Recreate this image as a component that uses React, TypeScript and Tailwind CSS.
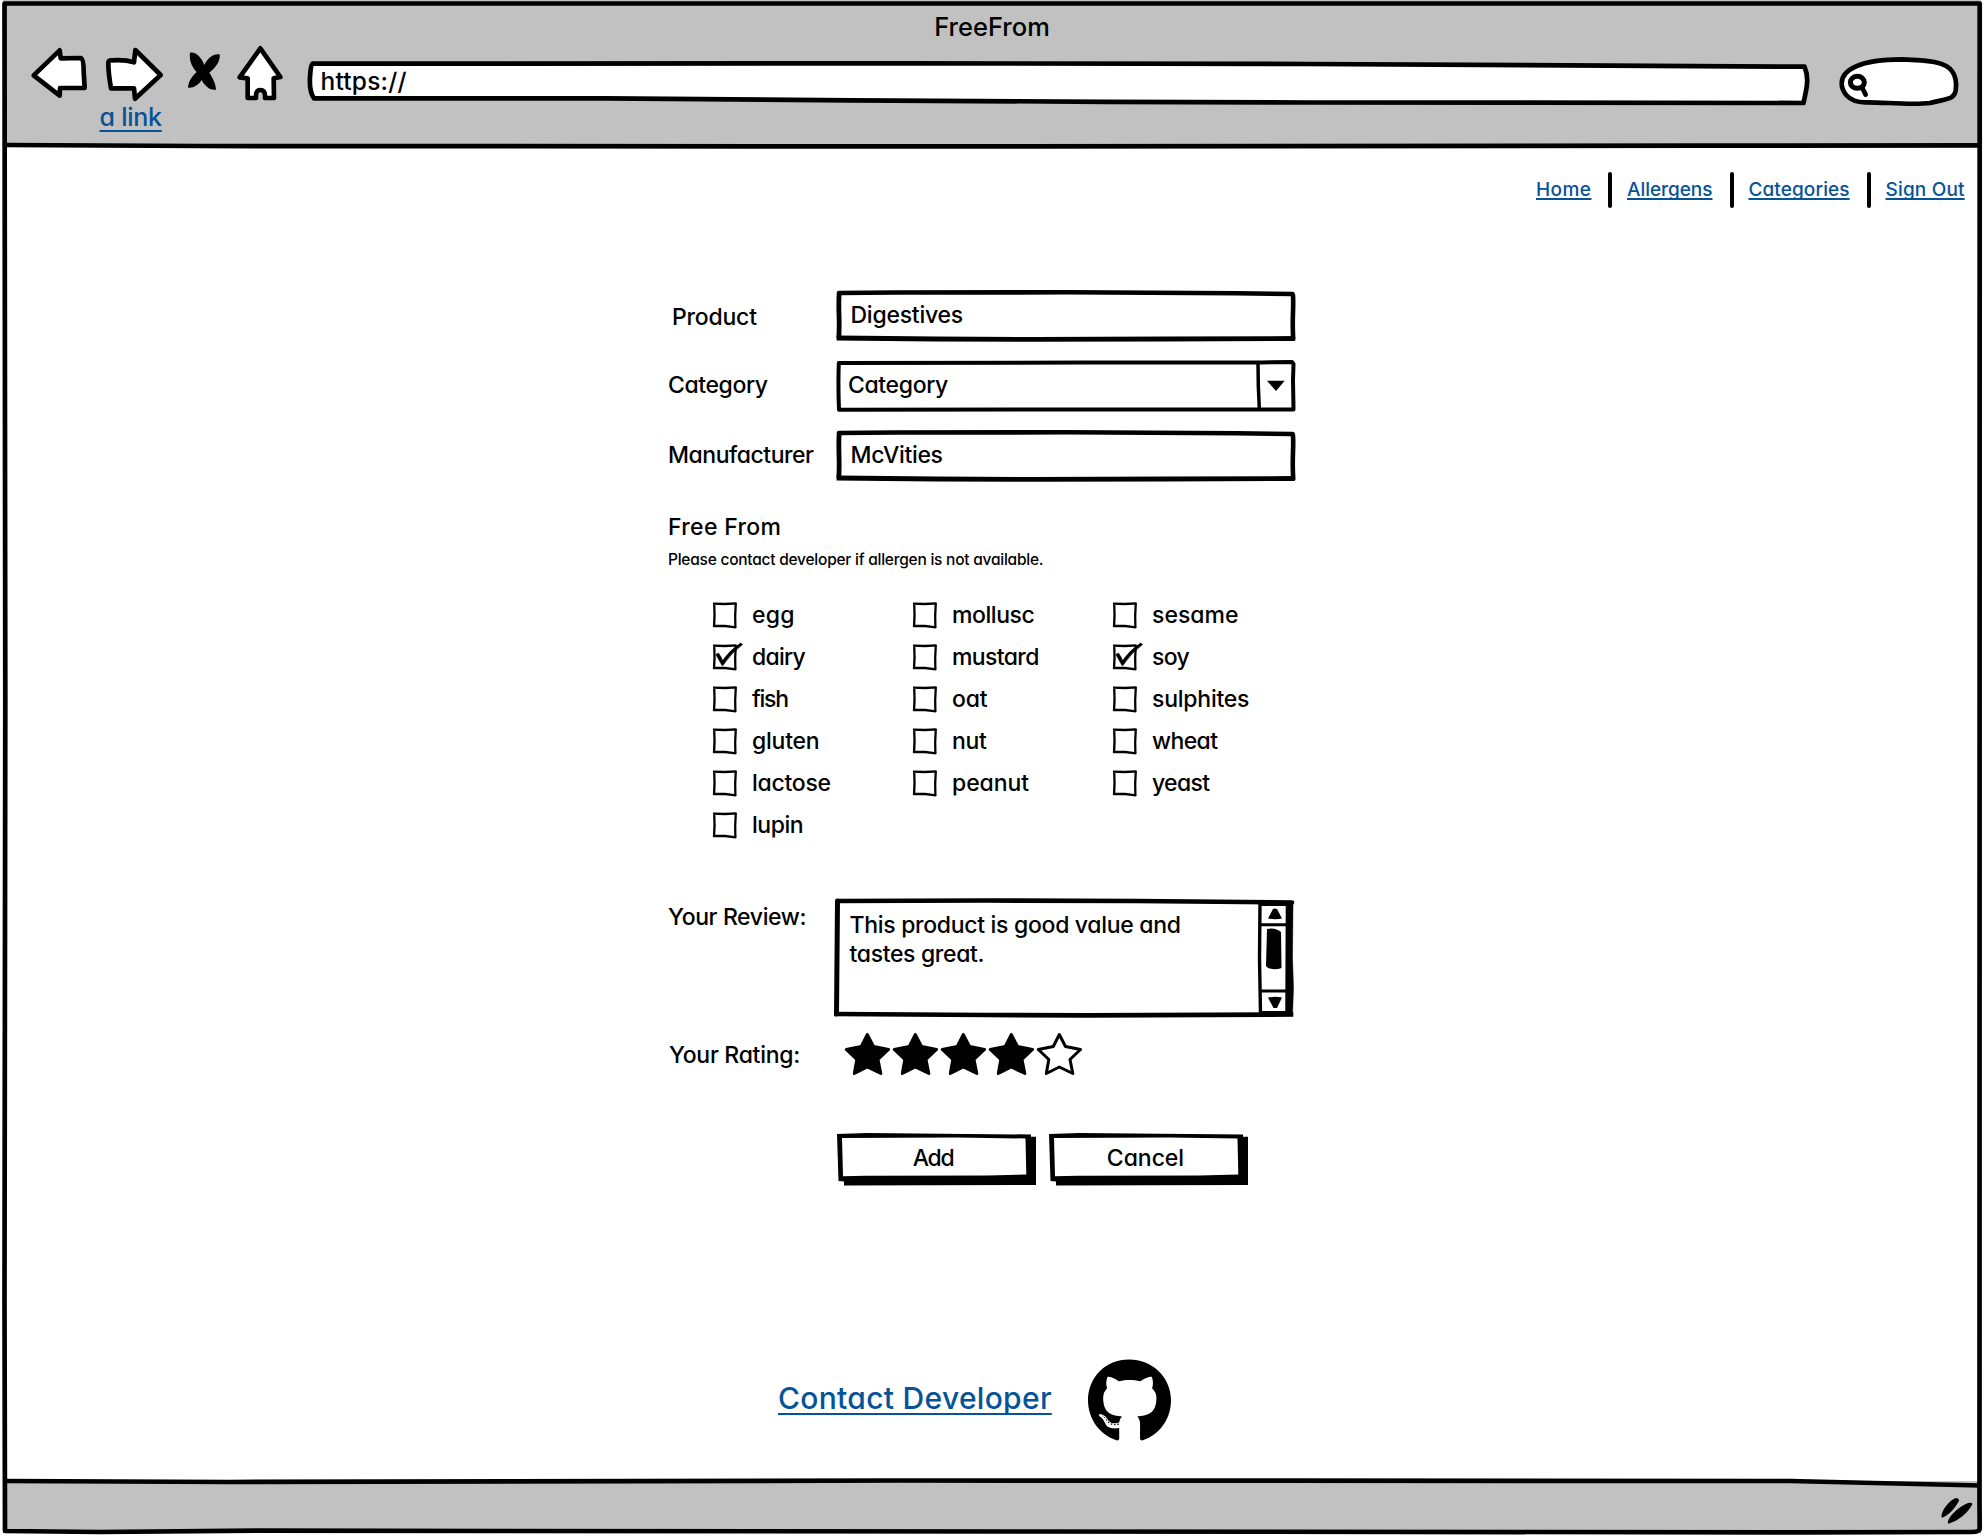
import { useLayoutEffect, useRef, useState, type ReactNode } from "react";
import { FaGithub } from "react-icons/fa";

/** One line of text whose letter spacing is adjusted so that it spans `width` pixels. */
function Fit({ text, width, className = "" }: { text: string; width: number; className?: string }) {
  const ref = useRef<HTMLSpanElement>(null);
  const [spacing, setSpacing] = useState(0);
  useLayoutEffect(() => {
    if (!ref.current) return;
    const natural = ref.current.getBoundingClientRect().width - spacing * text.length;
    setSpacing((width + 2 - natural) / (text.length - 1));
    // eslint-disable-next-line
  }, [text, width]);
  return (
    <span className="inline-block whitespace-nowrap" style={{ width }}>
      <span ref={ref} className={"-ml-[1px] inline-block " + className} style={{ letterSpacing: spacing }}>
        {text}
      </span>
    </span>
  );
}

function Link({ text, width, className = "" }: { text: string; width: number; className?: string }) {
  return (
    <a href="#" className="text-[#065398]">
      <Fit
        text={text}
        width={width}
        className={"underline decoration-2 [text-decoration-skip-ink:none] " + className}
      />
    </a>
  );
}

function WindowFrame() {
  return (
    <svg className="pointer-events-none absolute inset-0" width="1984" height="1536" fill="none" stroke="#000" strokeWidth="4.7">
      <path d="M4.5 3.5H1979.7L1979.5 1500L1979.7 1529Q1979 1532 1972 1532L1800 1532.3L500 1531L260 1530.6L100 1532L5 1531L4.5 1300L5.3 700Z" strokeLinejoin="round" />
      <path d="M5 145L200 146L1000 146.4L1700 145.7L1980 145.3" />
      <path d="M5 1481L230 1482L900 1480.5L1790 1481L1980 1485.5" />
      <path d="M1941.5 1517.5C1941 1510 1950 1500 1956 1498Q1959 1498 1959 1501C1955 1508 1949 1515 1943 1517.5Z M1948 1523.5C1947 1517 1960 1506 1968 1503Q1972 1502 1972.500 1504C1968 1513 1958 1521 1949 1523.500Z" fill="#000" stroke="none" />
    </svg>
  );
}

function Field({ children }: { children: ReactNode }) {
  return (
    <div className="relative flex h-[51px] w-[460px] items-center pb-px pl-[15.500px]">
      <svg className="absolute inset-0 overflow-visible" width="460" height="51" fill="none" stroke="#000">
        <path d="M3 3L60 2.500L230 2.300L400 3.200L456.500 4" strokeWidth="4.600" strokeLinecap="round" />
        <path d="M3 48L100 49L200 49.400L330 49L456.500 48.500" strokeWidth="4.800" strokeLinecap="square" />
        <path d="M3.200 3C2 20 4 28 2.800 48" strokeWidth="4.800" />
        <path d="M456.800 4C458.300 16 455.600 26 457.300 50" strokeWidth="4.600" />
      </svg>
      <div className="relative">{children}</div>
    </div>
  );
}

function Select({ children }: { children: ReactNode }) {
  return (
    <div className="relative flex h-[52px] w-[460px] items-center pl-[13px] pb-[2px]">
      <svg className="absolute inset-0 overflow-visible" width="460" height="52" fill="none" stroke="#000" strokeWidth="4">
        <path d="M2.800 3L250 2.500L425 2.500L456 2L457.500 4L457 20L457.500 49.500L3 49.700Q2 26 2.800 3Z" strokeLinejoin="round" />
        <path d="M422 3Q422 26 423.300 48" strokeWidth="3.500" />
        <path d="M431 20.700H448.700L440 31Z" fill="#000" stroke="none" />
      </svg>
      <div className="relative">{children}</div>
    </div>
  );
}

function Review() {
  return (
    <div className="relative h-[120px] w-[460px] pt-[13px] pl-[14.500px]">
      <svg className="absolute inset-0 overflow-visible" width="460" height="120" fill="none" stroke="#000">
        <path d="M2 3L150 2.500L300 3L456 4.500" strokeWidth="4.600" strokeLinecap="round" />
        <path d="M0.500 116L150 117L250 117.400L455 116.500" strokeWidth="4.600" strokeLinecap="square" />
        <path d="M1.500 3Q1 60 0.500 116" strokeWidth="5" strokeLinecap="round" />
        <path d="M450 4L457 5L456.500 60L457.500 90L456.500 118L449.500 117Z" fill="#000" stroke="#000" strokeWidth="0.500" />
        <path d="M424 5L423.500 60L424.500 116" strokeWidth="3.400" />
        <path d="M424 6.500H451M424 26.800H451M424 93H451M424 114.500H451" strokeWidth="3" />
        <path d="M438.500 10.500L441 11L446 20.500Q439 22 432 20.500L437 11Z M432 99.500Q439 98 446 99.500L441 110H437.500Z" fill="#000" stroke="none" />
        <path d="M431 31Q439 29 445 34L445.500 70Q439 72.500 432 70L430 68Z" fill="#000" stroke="none" />
      </svg>
      <p className="relative flex flex-col leading-[29px]">
        <Fit text="This product is good value and" width={329.5} />
        <Fit text="tastes great." width={133} />
      </p>
    </div>
  );
}

function Checkbox({ label, width, checked = false }: { label: string; width: number; checked?: boolean }) {
  return (
    <label className="flex h-[42px] items-center">
      <svg className="mr-4 shrink-0 overflow-visible" width="24" height="26" fill="none" stroke="#000">
        <path d="M0 1.700L12 2L23.500 1.300M1.200 1Q2 14 1 25M0.500 24L12 24L23 25.300M22.800 1Q21.800 14 22.400 26" strokeWidth="2.300" />
        {checked && <path d="M2.800 10.500L5.500 9Q8.500 13 9.500 16.500Q17 6 27.500 -1L29.700 0.500Q18 9 10 21.500H9Q6 16 2.800 10.500Z" fill="#000" stroke="#000" strokeWidth="0.500" />}
      </svg>
      <Fit text={label} width={width} />
    </label>
  );
}

const STAR = "M22.300 1.500L28.500 13.500L43.500 16.500L33 26.500L35.800 40.500L22.300 34L9.300 40.500L11.800 26.500L1.300 16.500L16.300 13.500Z";

function Star({ filled }: { filled: boolean }) {
  return (
    <svg className="mr-[3px] overflow-visible" width="45" height="42" fill={filled ? "#000" : "#fff"} stroke="#000" strokeWidth="3" strokeLinejoin="round">
      <path d={STAR} />
    </svg>
  );
}

function Button({ text, width }: { text: string; width: number }) {
  return (
    <button type="button" className="relative flex h-[53px] w-[199px] items-center justify-center pr-[6px] pb-[3px]">
      <svg className="absolute inset-0" width="199" height="53">
        <path d="M0 1L30 0L194 1.500V3.700H199V52L7 52.600V48.500L1.500 48Z" />
        <path d="M5 5L120 4.500L188.500 5.500L189.300 41.500L150 42.500L28 42.800L6 43.300Z" fill="#fff" />
      </svg>
      <span className="relative flex">
        <Fit text={text} width={width} />
      </span>
    </button>
  );
}

const COLUMNS: [string, number, boolean?][][] = [
  [["egg", 40.4], ["dairy", 51.8, true], ["fish", 35], ["gluten", 65.7], ["lactose", 77], ["lupin", 49.7]],
  [["mollusc", 80.8], ["mustard", 85.4], ["oat", 33.7], ["nut", 32.8], ["peanut", 75]],
  [["sesame", 84.6], ["soy", 35.8, true], ["sulphites", 95.5], ["wheat", 64], ["yeast", 56]],
];

const NAV: [string, number][] = [["Home", 53], ["Allergens", 83.5], ["Categories", 99], ["Sign Out", 77]];

function Header() {
  return (
    <header className="h-[146px] bg-[#c1c1c1] pt-[13px]">
      <h1 className="flex h-7 justify-center text-[25.500px] leading-7">
        <Fit text="FreeFrom" width={113.7} />
      </h1>
      <div className="flex items-start">
        <svg className="ml-[25px] mt-[3px]" width="262" height="62" viewBox="84 132 786 186" fill="#fff" stroke="#000" strokeWidth="14" strokeLinejoin="round">
          <path d="M101 226L179 151L182 175L243 174Q251 178 251 215L254 264L180 264L179 287Z" />
          <path d="M406 150L482 225L405 296L402 265L333 265Q325 220 325 190Q324 180 335 181Q375 178 402 187Z" />
          <path d="M570 158C590 155 605 175 613 195C622 175 640 160 659 163C662 185 645 205 628 218C640 235 648 255 648 269C628 272 612 255 605 240C595 255 580 265 564 263C565 245 575 230 590 216C575 200 567 180 570 158Z" fill="#000" stroke="none" />
          <path d="M781 145L841 231L821 235L822 294L795 294Q797 270 781 270Q766 270 768 294L743 294L743 235L719 232Z" />
        </svg>
        <div className="relative ml-[16px] mt-[18px] flex h-[48px] w-[1506px] items-center pl-[15.500px]">
          <svg className="absolute inset-0" width="1506" height="48" fill="#fff" stroke="#000" strokeWidth="4.700" strokeLinejoin="round">
            <path d="M6.500 4.700L600 4.300L1000 5L1498.500 7.700Q1503 18 1500 32L1497.500 44L1000 43.500L800 42.800L545 41.300L300 39.300L8 39.300Q2.500 32 4.300 14Q5 6 6.500 4.700Z" />
          </svg>
          <span className="relative -top-[1px] text-[24.500px] leading-7 -mt-[3px]">
            <Fit text="https://" width={84} />
          </span>
        </div>
        <svg className="ml-[26px] mt-[15px]" width="122" height="51" viewBox="1014 168 366 153" fill="#fff" stroke="#000" strokeWidth="14" strokeLinejoin="round" strokeLinecap="round">
          <path d="M1095 307C1040 306 1025 270 1025 250C1025 210 1080 178 1205 178C1280 180 1340 185 1357 215C1368 230 1370 250 1367 272C1362 300 1340 296 1290 309C1230 316 1150 306 1095 307" />
          <ellipse cx="1072" cy="247" rx="21" ry="18" strokeWidth="15" />
          <path d="M1087 264L1097 284" strokeWidth="14" />
        </svg>
      </div>
    </header>
  );
}

export default function App() {
  return (
    <div className="relative flex h-[1536px] w-[1984px] flex-col overflow-hidden bg-white px-[3px] pt-[2px] pb-[3px] font-['Inter',sans-serif] text-[23px] font-medium leading-7 text-black [font-feature-settings:'cv11']">
      <div className="-mt-[2px]">
        <Header />
      </div>
      <div className="absolute left-[100.500px] top-[103px] text-[25px]">
        <Link text="a link" width={60.5} className="underline-offset-[4px]" />
      </div>

      <main className="-mx-[3px] flex flex-1 flex-col pt-[26px]">
        <nav className="flex h-9 items-center justify-end pr-[20.500px] text-[19px]">
          {NAV.map(([text, width], i) => (
            <div key={text} className="flex h-9 items-center">
              {i > 0 && <span className="mr-[16px] ml-[18px] h-9 w-[4px] rounded-full bg-black" />}
              <Link text={text} width={width} className="underline-offset-[2px]" />
            </div>
          ))}
        </nav>

        <form className="ml-[669px] mt-[82px] w-[650px]">
          <div className="flex items-center">
            <span className="w-[167px] pl-1 pt-[2px]"><Fit text="Product" width={83} /></span>
            <Field><Fit text="Digestives" width={110.7} /></Field>
          </div>
          <div className="mt-[19px] flex items-center">
            <span className="w-[167px] pb-[2px]"><Fit text="Category" width={98} /></span>
            <Select><Fit text="Category" width={98.3} /></Select>
          </div>
          <div className="mt-[18px] flex items-center">
            <span className="w-[167px] pb-px"><Fit text="Manufacturer" width={144} /></span>
            <Field><Fit text="McVities" width={90.5} /></Field>
          </div>

          <h2 className="mt-8 h-7"><Fit text="Free From" width={111} /></h2>
          <p className="mt-[9px] flex h-5 text-[15.500px] leading-5"><Fit text="Please contact developer if allergen is not available." width={373.5} /></p>

          <div className="ml-11 mt-6 flex h-[252px]">
            {COLUMNS.map((column, i) => (
              <div key={i} className="w-[200px] shrink-0">
                {column.map(([label, width, checked]) => (
                  <Checkbox key={label} label={label} width={width} checked={checked} />
                ))}
              </div>
            ))}
          </div>

          <div className="mt-[52px] flex">
            <span className="w-[167px] pt-[5px]"><Fit text="Your Review:" width={136.5} /></span>
            <Review />
          </div>
          <div className="mt-[15px] flex h-[42px] items-center">
            <span className="w-[176px] pl-[1px] pt-[2px]"><Fit text="Your Rating:" width={129.2} /></span>
            {[1, 2, 3, 4, 5].map((n) => <Star key={n} filled={n <= 4} />)}
          </div>
          <div className="ml-[168px] mt-[58px] flex gap-[13px]">
            <Button text="Add" width={40} />
            <Button text="Cancel" width={75.3} />
          </div>
        </form>

        <div className="ml-[779px] mt-[172px] flex h-[86px] items-center">
          <div className="mr-[37px] -mt-[7px] text-[30px] leading-9">
            <Link text="Contact Developer" width={271.500} className="underline-offset-[4px]" />
          </div>
          <FaGithub className="h-[86px] w-[83px]" />
        </div>
      </main>

      <footer className="h-[52px] bg-[#c1c1c1]" />
      <WindowFrame />
    </div>
  );
}
